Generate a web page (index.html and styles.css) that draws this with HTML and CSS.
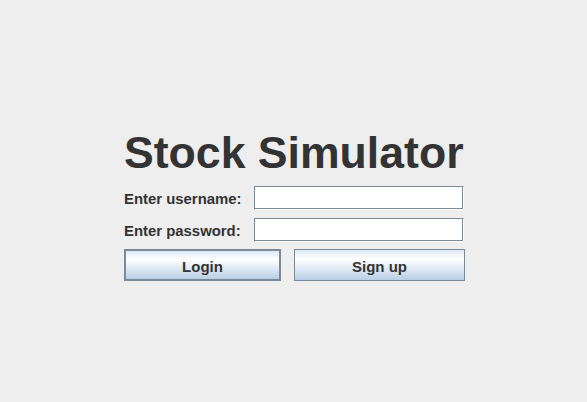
FILE: index.html
```html
<!DOCTYPE html>
<html>
<head>
<meta charset="utf-8">
<link rel="stylesheet" href="styles.css">
</head>
<body>
<div class="panel">
  <h1 class="title">Stock Simulator</h1>
  <div class="form">
    <label class="label" for="u">Enter username:</label>
    <input class="field" id="u" type="text">
    <label class="label" for="p">Enter password:</label>
    <input class="field" id="p" type="password">
  </div>
  <div class="buttons">
    <button class="btn btn-default">Login</button>
    <button class="btn">Sign up</button>
  </div>
</div>
</body>
</html>
```
FILE: styles.css
```css
html, body {
  margin: 0;
  padding: 0;
  background: #eeeeee;
}
body {
  width: 587px;
  height: 402px;
  overflow: hidden;
  font-family: "Liberation Sans", Arial, sans-serif;
  color: #333333;
}
.panel {
  width: 341px;
  margin-left: 124px;
  padding-top: 128px;
  display: flex;
  flex-direction: column;
}
.title {
  margin: 0 0 9px 0;
  font-size: 44.6px;
  line-height: 49px;
  font-weight: bold;
  white-space: nowrap;
}
.form {
  display: grid;
  grid-template-columns: 130px 211px;
  row-gap: 8px;
  align-items: center;
}
.label {
  font-size: 14.9px;
  font-weight: bold;
  line-height: 18px;
  white-space: nowrap;
  padding-top: 2px;
}
.field {
  box-sizing: border-box;
  width: 210px;
  height: 24px;
  margin: 0;
  padding: 0 4px;
  background: #ffffff;
  border: 1px solid;
  border-color: #7a8a99 #ffffff #ffffff #7a8a99;
  box-shadow: inset -1px -1px 0 #7a8a99;
  outline: none;
  font-family: inherit;
  font-size: 14px;
}
.buttons {
  display: flex;
  gap: 13px;
  margin-top: 7px;
}
.btn {
  box-sizing: border-box;
  height: 32px;
  margin: 0;
  padding: 0;
  width: 171px;
  border: 1px solid #7a8a99;
  background: linear-gradient(to bottom, #dde8f3 0%, #ffffff 30%, #b8cfe5 100%);
  font-family: inherit;
  font-size: 15px;
  font-weight: bold;
  color: #333333;
  padding-top: 2px;
}
.btn-default {
  width: 157px;
  border-width: 2px;
}
```
